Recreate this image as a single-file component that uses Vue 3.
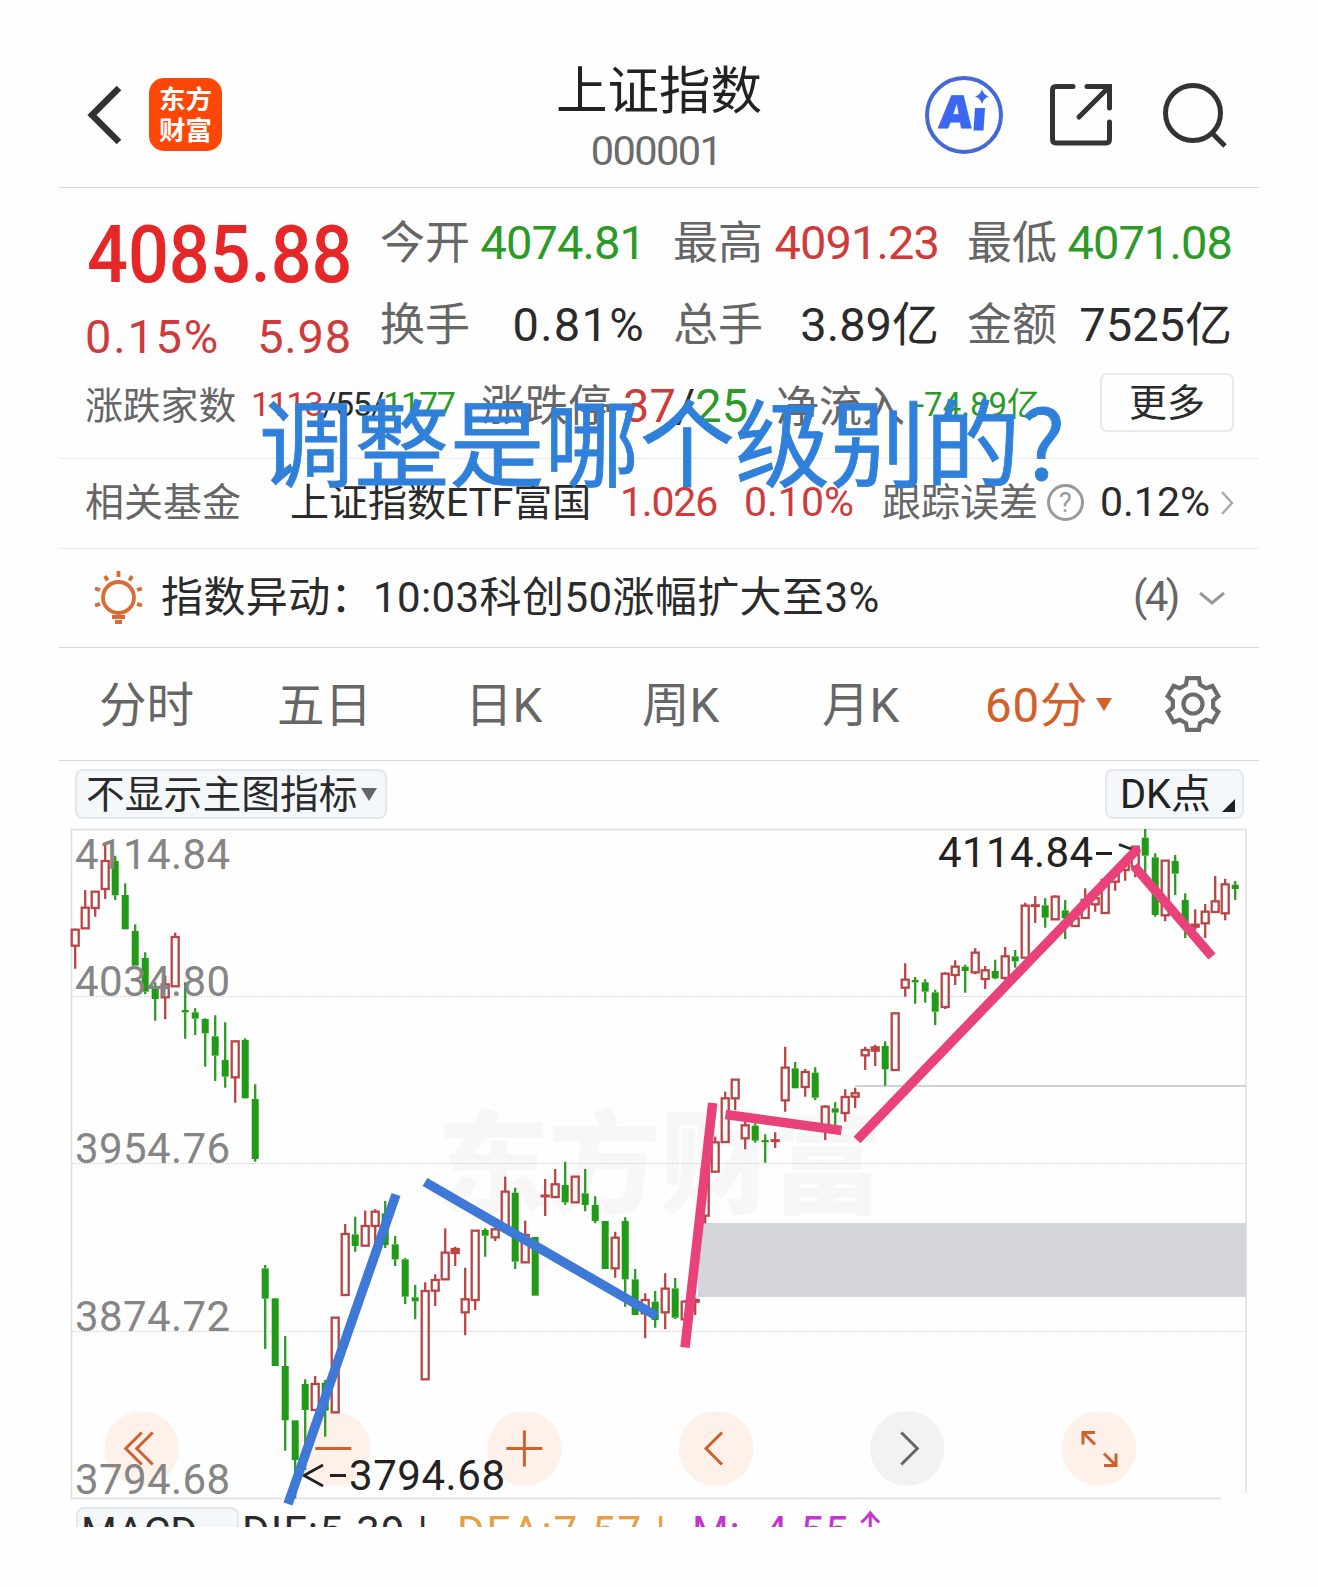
<template>
  <main class="page">
    <header class="topbar">
      <svg class="back" viewBox="0 0 34 60">
        <path d="M31 3 L4 30 L31 57" />
      </svg>
      <div class="logo">
        <span>东方</span>
        <span>财富</span>
      </div>
      <div class="heading">
        <h1>上证指数</h1>
        <p>000001</p>
      </div>
      <svg class="ai" viewBox="0 0 80 80">
        <circle cx="40" cy="40" r="37" />
        <text x="19" y="53.500" transform="skewX(-5)">A</text>
        <path d="M51 33 h10 l-1.500 22.500 h-10 z M58 14 q1.500 6 7 7.500 q-5.500 1.500 -7 7.500 q-1.500 -6 -7 -7.500 q5.500 -1.500 7 -7.500z" />
      </svg>
      <svg class="share" viewBox="0 0 64 64">
        <path d="M24 3.500 H7 Q3.500 3.500 3.500 7 V56 Q3.500 60 7 60 H57 Q60.500 60 60.500 56 V39 M38 3.500 H60.500 V25 M59.500 4.500 L30 34" />
      </svg>
      <svg class="search" viewBox="0 0 68 68">
        <circle cx="33" cy="32" r="27.500" />
        <path d="M52 52 L65 65" />
      </svg>
    </header>

    <section class="stats">
      <div class="quote">
        <div class="price-block">
          <div class="price">4085.88</div>
          <div class="change">
            <span class="rate">0.15%</span>
            <span>5.98</span>
          </div>
        </div>
        <div class="figures">
          <div v-for="f in figures" :key="f.label" class="figure">
            <span class="label">{{ f.label }}</span>
            <span :class="['value', f.tone]">{{ f.value }}</span>
          </div>
        </div>
      </div>
      <div class="breadth">
        <span class="breadth-label">涨跌家数</span>
        <span class="breadth-count"><i class="up">1113</i>/55/<i class="down">1177</i></span>
        <span class="limit-label">涨跌停</span>
        <span class="limit-count"><i class="up">37</i>/<i class="down">25</i></span>
        <span class="flow-label">净流入</span>
        <span class="flow-value down">-74.89亿</span>
        <button class="more">更多</button>
      </div>
      <div class="caption">调整是哪个级别的?</div>
    </section>

    <section class="fund">
      <span class="fund-label">相关基金</span>
      <span class="fund-name">上证指数ETF富国</span>
      <span class="fund-price up">1.026</span>
      <span class="fund-rate up">0.10%</span>
      <span class="fund-error">跟踪误差</span>
      <span class="help">?</span>
      <span class="fund-track">0.12%</span>
      <svg class="chevron-right" viewBox="0 0 14 26">
        <path d="M2 2 L12 13 L2 24" />
      </svg>
    </section>

    <section class="alert">
      <svg class="bulb" viewBox="0 0 50 54">
        <circle cx="24.500" cy="27.500" r="15.500" />
        <path d="M24.500 1 V7 M11 6 l2.500 4.500 M38 6 l-2.500 4.500 M1 18.500 l5 1.500 M48 18.500 l-5 1.500 M1 35.500 l5 -1.500 M48 35.500 l-5 -1.500 M18 47 h13 M21 52 h7" />
      </svg>
      <span class="alert-text">指数异动：10:03科创50涨幅扩大至3%</span>
      <span class="alert-count">(4)</span>
      <svg class="chevron-down" viewBox="0 0 28 16">
        <path d="M2 3 L14 13 L26 3" />
      </svg>
    </section>

    <nav class="tabs">
      <span>分时</span>
      <span>五日</span>
      <span>日K</span>
      <span>周K</span>
      <span>月K</span>
      <span class="active">60分<i class="caret"></i></span>
      <svg class="gear" viewBox="-30 -30 60 60">
        <path :d="gearPath" />
        <circle r="9.500" />
      </svg>
    </nav>

    <div class="tools">
      <button class="tool indicator">不显示主图指标<i class="caret"></i></button>
      <button class="tool dk">DK点<i class="corner"></i></button>
    </div>

    <svg class="chart" viewBox="59 829 1200 670">
      <g class="watermark">
        <text x="437" y="1205" textLength="446">东方财富</text>
      </g>
      <path class="frame" d="M1246 1493 V829.500 H71.500 V1498.500 H1221" />
      <path class="grid" d="M72 996.500 H1246 M72 1163.500 H1246 M72 1331.500 H1246" />
      <path class="gap-line" d="M855 1086 H1246" />
      <rect class="gap" x="698" y="1223" width="548" height="74" />

      <g v-for="(b, i) in buttons" :key="i" :class="['ctrl', b.tone]" :transform="`translate(${b.x} 1448.500)`">
        <circle r="37.300" />
        <path :d="b.icon" />
      </g>

      <g v-for="c in candles" :key="c.x" :class="c.kind">
        <path :d="`M${c.x} ${c.high} V${c.top} M${c.x} ${c.bottom} V${c.low}`" />
        <rect :x="c.x - c.half" :y="c.top" :width="c.half * 2" :height="c.bottom - c.top" />
      </g>

      <g class="axis">
        <text v-for="l in axis" :key="l.text" x="75" :y="l.y" textLength="155">{{ l.text }}</text>
      </g>
      <g class="mark">
        <text x="938" y="867" textLength="155">4114.84</text>
        <path d="M1096 853.500 H1112 M1119 844.500 L1138 851.500" />
        <path d="M323 1465 L304 1475.500 L323 1486 M330 1475.500 H346" />
        <text x="349" y="1489.500" textLength="156">3794.68</text>
      </g>

      <path class="trend blue" d="M396 1194.500 L288 1504 M425 1182 L656.500 1316" />
      <path class="trend pink" d="M712.700 1103 L685 1347.500 M725.500 1114.500 L841.500 1130.500 M857 1140 L1136 850.500 M1134 866 L1212 956.500" />
      <circle class="trend-tip" cx="1136" cy="851" r="4.800" />
    </svg>

    <div class="macd">
      <button class="tool macd-name">MACD<i class="caret"></i></button>
      <span class="dif">DIF:5.39 |</span>
      <span class="dea">DEA:7.57 |</span>
      <span class="m">M: -4.55↑</span>
    </div>
  </main>
</template>

<script setup>
const figures = [
  { label: '今开', value: '4074.81', tone: 'down' },
  { label: '最高', value: '4091.23', tone: 'up' },
  { label: '最低', value: '4071.08', tone: 'down' },
  { label: '换手', value: '0.81%', tone: 'plain wide' },
  { label: '总手', value: '3.89亿', tone: 'plain' },
  { label: '金额', value: '7525亿', tone: 'plain' },
];

const axis = [
  { text: '4114.84', y: 869 },
  { text: '4034.80', y: 996 },
  { text: '3954.76', y: 1163 },
  { text: '3874.72', y: 1331 },
  { text: '3794.68', y: 1494 },
];

const buttons = [
  { x: 141.7, tone: 'warm', icon: 'M0 -16 L-16 0 L0 16 M11 -16 L-5 0 L11 16' },
  { x: 333.3, tone: 'warm', icon: 'M-18 0 H18' },
  { x: 524.4, tone: 'warm', icon: 'M-18 0 H18 M0 -18 V18' },
  { x: 716, tone: 'warm', icon: 'M6 -16 L-10 0 L6 16' },
  { x: 907.3, tone: 'cool', icon: 'M-6 -16 L10 0 L-6 16' },
  { x: 1099, tone: 'warm', icon: 'M-4 -16 H-16 V-4 M-16 -16 L-4 -4 M5 17 H17 V5 M17 17 L5 5' },
];

// each bar: kind (r up, f up with solid body, g down), high, body top, body bottom, low
// values are thirds of a pixel below the segment's top
const segments = [
  {
    top: 820,
    bars: [
      'r 326 329 377 446', 'r 210 263 325 325', 'r 213 215 264 290', 'r 72 123 207 237',
      'g 107 123 226 240', 'g 190 225 328 328', 'g 313 333 437 437', 'g 397 414 515 523',
      'g 487 505 537 602', 'r 467 493 532 598', 'r 338 351 499 499', 'g 487 570 577 656',
      'g 565 577 596 645', 'g 595 597 640 740', 'g 586 649 707 783', 'g 607 720 770 803',
      'r 662 664 772 848', 'g 655 660 835 835', 'g 793 837 1017 1025',
    ],
  },
  {
    top: 1240,
    bars: ['g 75 85 176 327', 'g 175 175 378 378', 'g 288 378 541 632', 'g 541 541 660 775'],
  },
  {
    top: 1160,
    bars: [
      'g 658 672 750 930', 'r 648 672 750 750', 'g 660 668 752 830', 'r 471 473 757 760',
      'r 192 222 405 405', 'g 170 223 258 275', 'r 152 198 257 257', 'r 148 155 198 250',
      'g 123 160 255 264', 'g 228 253 298 318', 'g 294 298 410 432', 'g 375 412 424 478',
      'r 367 393 658 658', 'r 343 360 392 438', 'r 205 278 358 358', 'f 260 267 279 318',
      'r 323 418 457 526', 'r 211 212 420 450',
    ],
  },
  {
    top: 1140,
    bars: [
      'g 265 270 287 350', 'r 262 268 292 303', 'r 110 155 260 260', 'g 143 158 365 387',
      'r 242 285 367 367', 'g 291 291 467 467', 'f 117 167 169 228', 'r 87 133 171 175',
      'g 65 135 187 194', 'r 108 110 187 187', 'g 87 160 195 214', 'g 169 195 243 250',
      'g 243 243 387 387', 'r 275 293 385 413', 'g 232 243 418 500', 'g 387 418 525 525',
      'r 460 480 520 595', 'g 453 485 540 563', 'r 400 446 517 568', 'g 414 445 533 537',
      'r 480 485 538 540', 'f 475 480 485 525',
    ],
  },
  {
    top: 940,
    bars: [
      'r 690 690 827 850', 'r 590 607 695 695', 'r 455 475 606 606', 'r 417 419 475 510',
      'r 540 556 595 628', 'g 550 557 602 608', 'g 583 600 607 668', 'f 577 601 603 624',
      'r 320 383 481 515', 'g 366 385 445 445', 'r 387 396 441 470', 'g 382 398 473 480',
      'r 496 500 560 600', 'g 487 505 518 560', 'r 448 471 519 545', 'r 443 460 470 504',
      'r 320 330 346 390', 'f 314 322 332 378', 'g 304 318 388 437', 'r 219 220 390 390',
      'r 70 119 143 170', 'g 111 120 127 191', 'g 118 127 155 188', 'g 149 157 215 256',
      'r 97 101 201 207',
    ],
  },
  {
    top: 820,
    bars: [
      'r 421 440 465 495', 'g 434 440 453 518', 'r 385 398 457 463', 'r 438 451 477 507',
      'g 419 453 475 478', 'r 381 409 474 480', 'g 390 409 424 443', 'r 248 257 413 413',
      'f 228 256 258 309', 'g 235 256 293 323', 'r 226 230 298 298', 'g 240 271 295 357',
      'r 290 295 318 320', 'r 205 240 294 294', 'r 225 235 253 275', 'r 178 180 279 279',
      'r 160 165 185 212', 'r 120 130 150 182', 'r 78 80 140 172', 'g 27 53 107 195',
      'g 100 112 285 290', 'r 120 122 286 304', 'g 105 123 161 225', 'g 220 240 310 354',
      'f 268 314 320 330', 'r 252 275 310 354', 'r 168 244 276 276', 'r 176 193 280 301',
      'g 183 194 207 240',
    ],
  },
];

const kinds = { r: 'rise', f: 'rise solid', g: 'fall' };

const candles = segments
  .flatMap(({ top, bars }) =>
    bars.map((bar) => {
      const [kind, ...values] = bar.split(' ');
      const [high, bodyTop, bodyBottom, low] = values.map((v) => top + v / 3);
      return { kind: kinds[kind], half: 3.5, high, top: bodyTop, bottom: bodyBottom, low };
    })
  )
  .map((c, i) => ({ ...c, x: 75.2 + i * 10 }));

// six teeth, each one a flat top with sloped sides
const gearPath = (() => {
  const points = [];
  for (let i = 0; i < 6; i++) {
    const mid = i * 60 - 90;
    [[-20, 20.5], [-13, 26.5], [13, 26.5], [20, 20.5]].forEach(([offset, r]) => {
      const a = ((mid + offset) * Math.PI) / 180;
      points.push(`${(Math.cos(a) * r).toFixed(2)} ${(Math.sin(a) * r).toFixed(2)}`);
    });
  }
  return `M${points.join('L')}Z`;
})();
</script>

<style>
body {
  background: #fefefe;
}
</style>

<style scoped>
.page {
  width: 1200px;
  height: 1485px;
  padding: 42px 0 0 59px;
  overflow: hidden;
  font-family: Roboto, "Noto Sans CJK SC", sans-serif;
  color: #2b2b2b;
  white-space: nowrap;
}

svg {
  flex: none;
  fill: none;
  overflow: visible;
}

i {
  font-style: normal;
}

button {
  font-family: inherit;
  color: inherit;
  padding: 0;
  box-sizing: border-box;
}

.logo,
h1,
.label,
.breadth-label,
.limit-label,
.flow-label,
.more,
.caption,
.fund-label,
.fund-error,
.watermark {
  font-family: "Noto Sans CJK SC", sans-serif;
}

.up {
  color: #cf3b3b;
}

.down {
  color: #2b9a26;
}

/* header */
.topbar {
  display: flex;
  align-items: center;
  height: 145px;
  border-bottom: 1px solid #d9d9d9;
}

.back {
  width: 34px;
  height: 60px;
  margin-left: 29px;
  stroke: #2f3133;
  stroke-width: 6.5;
}

.logo {
  display: flex;
  flex-direction: column;
  align-items: center;
  justify-content: center;
  width: 73px;
  height: 70px;
  padding-bottom: 3px;
  margin-left: 27px;
  border-radius: 15px;
  background: #fc4706;
  color: #fff;
  font-size: 26.5px;
  font-weight: 700;
  line-height: 31px;
}

.heading {
  display: flex;
  flex-direction: column;
  align-items: center;
  width: 206px;
  margin-left: 334px;
}

.heading h1 {
  margin: 0;
  font-size: 51.5px;
  font-weight: 400;
  line-height: 66px;
  color: #222;
}

.heading p {
  margin: 3px 6px -3px 0;
  font-size: 41.5px;
  letter-spacing: -1.6px;
  line-height: 56px;
  color: #6b6b6b;
}

.ai {
  width: 80px;
  height: 80px;
  margin-left: 162px;
}

.ai circle {
  stroke: #4468d8;
  stroke-width: 4;
}

.ai text {
  font-family: "Noto Sans", sans-serif;
  font-size: 45px;
  font-weight: 900;
  fill: #3a67f0;
  stroke: #3a67f0;
  stroke-width: 1;
}

.ai path {
  fill: #3a67f0;
}

.share {
  width: 64px;
  height: 64px;
  margin-left: 45px;
  stroke: #333;
  stroke-width: 5;
  stroke-linecap: round;
}

.search {
  width: 68px;
  height: 68px;
  margin-left: 47px;
  stroke: #333;
  stroke-width: 5;
}

/* quote */
.stats {
  position: relative;
  height: 270px;
  border-bottom: 1px solid #ececec;
}

.quote {
  display: flex;
  height: 173px;
}

.price-block {
  width: 265px;
  padding: 25px 0 0 28px;
}

.price {
  font-size: 80px;
  font-weight: 500;
  line-height: 84px;
  color: #e62727;
  transform: scaleX(0.9);
  transform-origin: left;
}

.change {
  display: flex;
  justify-content: space-between;
  margin: 5px 0 0 -2px;
  font-size: 47px;
  letter-spacing: 0.8px;
  line-height: 70px;
  color: #cf3b3b;
}

.change .rate {
  letter-spacing: 1.8px;
}

.figures {
  display: grid;
  grid-template-columns: 293px 294px 293px;
  grid-template-rows: 81.5px 81.5px;
  padding: 10px 0 0 28px;
}

.figure {
  display: flex;
  justify-content: space-between;
  padding-right: 28px;
  font-size: 47px;
  line-height: 81px;
}

.value {
  margin-top: 4px;
  letter-spacing: -0.9px;
}

.value.plain {
  letter-spacing: 0;
}

.value.wide {
  letter-spacing: 1.3px;
}

.label {
  margin-top: 1px;
  font-size: 45px;
  color: #666;
}

.breadth {
  display: flex;
  align-items: center;
  height: 83px;
  padding-left: 26px;
  line-height: 60px;
}

.breadth-label {
  width: 166px;
  font-size: 37.8px;
  color: #666;
}

.breadth-count {
  width: 230px;
  margin-top: 3px;
  font-size: 34px;
  letter-spacing: -1.3px;
}

.limit-label {
  width: 142px;
  font-size: 43.5px;
  color: #666;
}

.limit-count {
  width: 153px;
  margin-top: 6px;
  font-size: 47px;
}

.flow-label {
  width: 139px;
  font-size: 43px;
  color: #666;
}

.flow-value {
  width: 185px;
  margin-top: 5px;
  font-size: 33px;
}

.more {
  width: 134px;
  height: 59px;
  padding-bottom: 6px;
  border: 2px solid #e8e8e8;
  border-radius: 7px;
  background: transparent;
  font-size: 38px;
  line-height: 48px;
}

/* question laid over the rows */
.caption {
  position: absolute;
  left: 200px;
  top: 191px;
  z-index: 2;
  font-size: 95px;
  letter-spacing: 0.2px;
  line-height: 120px;
  color: #2f80da;
  -webkit-text-stroke: 0.8px #2f80da;
}

.fund {
  display: flex;
  align-items: center;
  height: 90px;
  padding: 0 0 9px 26px;
  box-sizing: border-box;
  border-bottom: 1px solid #ececec;
  font-size: 41px;
  line-height: 60px;
}

.fund-label {
  width: 205px;
  font-size: 39px;
  color: #666;
}

.fund-name {
  width: 330px;
  margin-top: 7px;
  font-size: 39px;
}

.fund-price {
  width: 124px;
  margin-top: 5px;
  letter-spacing: -1.2px;
}

.fund-rate {
  width: 138px;
  margin-top: 5px;
}

.fund-error {
  width: 165px;
  font-size: 39px;
  color: #666;
}

.help {
  width: 31px;
  height: 31px;
  margin-top: 7px;
  border: 3px solid #999;
  border-radius: 50%;
  font-size: 27px;
  line-height: 32px;
  text-align: center;
  color: #999;
}

.fund-track {
  width: 119px;
  margin: 5px 0 0 16px;
}

.chevron-right {
  width: 14px;
  height: 26px;
  margin: 8px 0 0 1px;
  stroke: #aaa;
  stroke-width: 2.5;
}

.alert {
  display: flex;
  align-items: center;
  height: 99px;
  padding: 0 33px 3px 35px;
  box-sizing: border-box;
  border-bottom: 1px solid #d9d9d9;
  font-size: 42px;
  line-height: 60px;
}

.bulb {
  width: 50px;
  height: 54px;
  margin-right: 17px;
  stroke: #db6b35;
  stroke-width: 3.8;
}

.alert-text {
  flex: 1;
  margin-top: 2px;
  letter-spacing: 0.4px;
}

.alert-count {
  margin-right: 20px;
  letter-spacing: -2.5px;
  color: #666;
}

.chevron-down {
  width: 28px;
  height: 16px;
  margin-top: 2px;
  stroke: #999;
  stroke-width: 3;
}

.tabs {
  display: grid;
  grid-template-columns: 178px 188px 177px 180px 163px 178px 60px;
  align-items: center;
  height: 113px;
  padding: 4px 0 0 40px;
  box-sizing: border-box;
  border-bottom: 1px solid #d9d9d9;
  font-size: 47.5px;
  line-height: 70px;
  color: #666;
}

.tabs .active {
  display: flex;
  align-items: center;
  letter-spacing: 0.8px;
  color: #d2602b;
}

.caret {
  width: 0;
  height: 0;
  border: 8px solid transparent;
  border-top: 13px solid currentColor;
  border-bottom: 0;
}

.active .caret {
  margin: 0 0 4px 8px;
}

.gear {
  width: 60px;
  height: 60px;
  margin-bottom: 4px;
  stroke: #6b6b6b;
  stroke-width: 4.2;
}

/* chart */
.tools {
  display: flex;
  justify-content: space-between;
  padding: 8px 15px 10px 16px;
}

.tool {
  display: flex;
  align-items: center;
  height: 50px;
  padding-top: 1px;
  border: 2px solid #e3e8ea;
  border-radius: 8px;
  background: #f5f8fa;
  font-size: 38.8px;
  line-height: 46px;
}

.indicator {
  width: 312px;
  padding-left: 9px;
}

.indicator .caret {
  margin-left: 3px;
  color: #666;
}

.dk {
  width: 139px;
  padding-left: 13px;
  font-size: 39.8px;
  color: #222;
}

.corner {
  align-self: flex-end;
  margin: 0 0 5px 11px;
  border-left: 13px solid transparent;
  border-bottom: 13px solid #222;
}

.chart {
  position: relative;
  z-index: 1;
  display: block;
  width: 1200px;
  height: 670px;
}

.watermark text {
  font-size: 112px;
  font-weight: 900;
  fill: #f7f7f7;
}

.frame {
  stroke: #dfdfdf;
  stroke-width: 1.5;
}

.grid {
  stroke: #cfcfcf;
  stroke-dasharray: 1.5 1.5;
}

.gap-line {
  stroke: #d2d2d5;
  stroke-width: 1.8;
}

.gap {
  fill: #d4d6dc;
}

.rise {
  stroke: #b84545;
  stroke-width: 2.3;
}

.solid rect {
  fill: #b84545;
}

.fall path {
  stroke: #2b9a26;
  stroke-width: 2.3;
}

.fall rect {
  fill: #219a18;
}

.axis text {
  font-size: 42px;
  fill: #858585;
}

.mark text {
  font-size: 42px;
  fill: #222;
}

.mark path {
  stroke: #222;
  stroke-width: 2.8;
}

.trend {
  stroke-width: 9.5;
}

.blue {
  stroke: #3e79d8;
}

.pink {
  stroke: #e9427b;
}

.trend-tip {
  fill: #e9427b;
}

.ctrl path {
  stroke-width: 3;
}

.warm circle {
  fill: #fdf1e9;
}

.warm path {
  stroke: #cd6230;
}

.cool circle {
  fill: #f2f2f2;
}

.cool path {
  stroke: #666;
}

.macd {
  display: flex;
  align-items: flex-start;
  height: 60px;
  padding: 8px 0 0 17px;
  font-size: 42px;
  line-height: 50px;
}

.macd-name {
  width: 163px;
  height: 51px;
  padding: 0 0 2px 3px;
  font-size: 41px;
}

.macd-name .caret {
  margin: 3px 0 0 16px;
  color: #666;
}

.dif {
  width: 215px;
  margin-left: 3px;
  letter-spacing: 1.2px;
}

.dea {
  width: 235px;
  letter-spacing: 1.9px;
  color: #e5a043;
}

.m {
  letter-spacing: 0.8px;
  color: #c435cf;
}
</style>
